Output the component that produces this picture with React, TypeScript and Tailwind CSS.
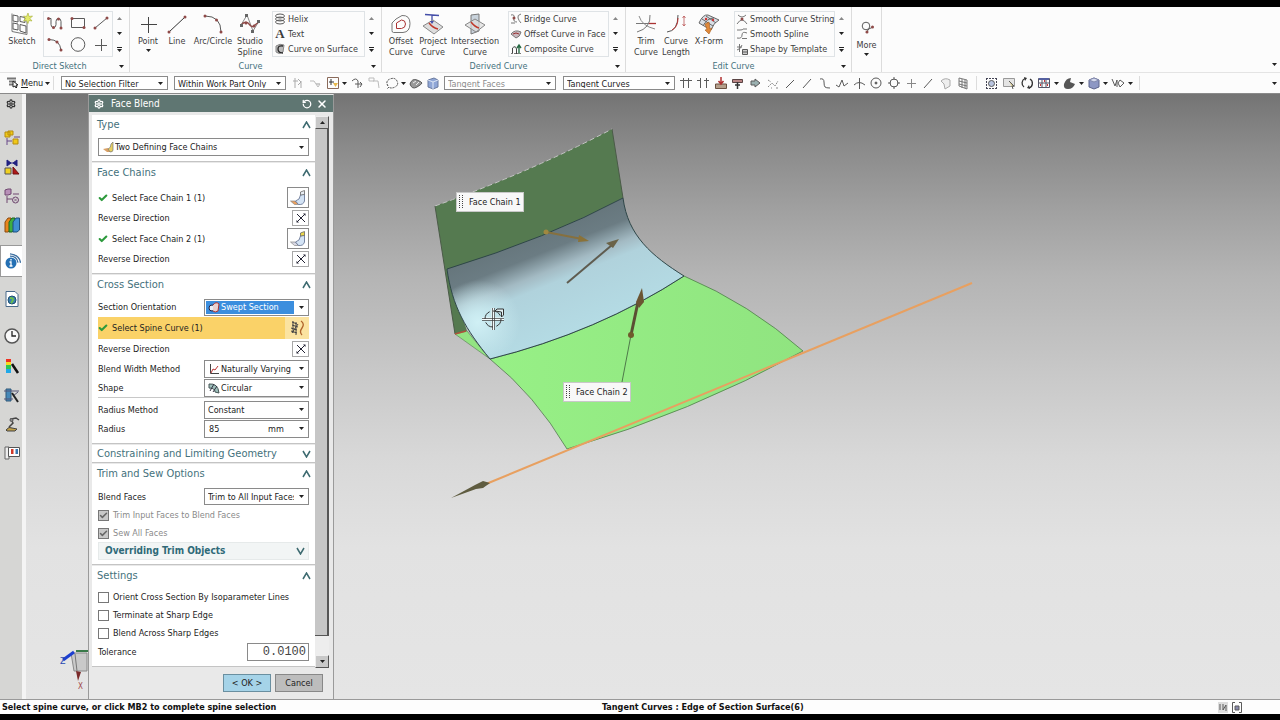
import { useState } from "react";
import type { ReactNode } from "react";
import { Check, RotateCcw, Settings, X } from "lucide-react";
import clsx from "clsx";

/* ---------- small building blocks ---------- */

interface GlyphProps {
  w?: number;
  h?: number;
  children: ReactNode;
}

function Glyph({ w = 14, h = 14, children }: GlyphProps) {
  return (
    <svg width={w} height={h} viewBox={`0 0 ${w} ${h}`} fill="none" stroke="#5a5a5a" strokeWidth="1" className="shrink-0" aria-hidden="true">
      {children}
    </svg>
  );
}

function Triangle({ up = false, dim = false }: { up?: boolean; dim?: boolean }) {
  return (
    <svg width="5" height="3" viewBox="0 0 5 3" className={clsx("shrink-0", up && "rotate-180")} aria-hidden="true">
      <path d="M0 0h5L2.5 3z" fill={dim ? "#888" : "#222"} />
    </svg>
  );
}

function Dot({ x, y }: { x: number; y: number }) {
  return <circle cx={x} cy={y} r="1.5" fill="#8f4a48" stroke="none" />;
}

/* ---------- ribbon icons ---------- */

const icons = {
  sketch: (
    <Glyph w={22} h={22}>
      <path d="M2 2l5 1v6l-5-1zM9 3.500l5 1v5l-5-1zM2 10l5 1v6l-5-1zM9 11.500l6 1.500v7l-6-2z" />
      <path d="M1 .5v18l15 3V8" stroke="#777" />
      <path d="M17 0l1 3.500L21.500 3l-2.500 2.500 2 2.500-3-.5-1 3-1.500-3-3 .5 2-2.500-2-2.500 3 .5z" fill="#e3ea6a" stroke="#a5ac38" strokeWidth=".6" />
    </Glyph>
  ),
  profile: (
    <Glyph w={16} h={14}>
      <path d="M1 2.500h3v6q0 3 2.500 3t2.500-3V5.500q0-3 2.500-3t2.500 3V12" />
      <Dot x={1.500} y={2.500} />
      <Dot x={14} y={12} />
      <Dot x={6.500} y={11.500} />
      <Dot x={11.500} y={3} />
    </Glyph>
  ),
  rect: (
    <Glyph w={16} h={14}>
      <path d="M1.500 2.500h13v9h-13z" />
      <Dot x={2} y={2.500} />
      <Dot x={14} y={11.500} />
    </Glyph>
  ),
  line: (
    <Glyph w={16} h={14}>
      <path d="M2 12L14 2" />
      <Dot x={2} y={12} />
      <Dot x={14} y={2} />
    </Glyph>
  ),
  arc: (
    <Glyph w={16} h={14}>
      <path d="M2 1.500q11 0 12 11" />
      <Dot x={2} y={1.500} />
      <Dot x={10} y={4} />
      <Dot x={14} y={12} />
    </Glyph>
  ),
  circle: (
    <Glyph w={16} h={15}>
      <circle cx="8" cy="7.500" r="6.800" />
    </Glyph>
  ),
  plus: (
    <Glyph w={16} h={14}>
      <path d="M8.500 1v12M2 7.500h12" />
    </Glyph>
  ),
  point: (
    <Glyph w={20} h={20}>
      <path d="M10.500 3v16M3 10.500h16" stroke="#444" />
    </Glyph>
  ),
  bigLine: (
    <Glyph w={20} h={20}>
      <path d="M2 18L18 3" stroke="#333" />
      <Dot x={2} y={18} />
      <Dot x={18} y={3} />
    </Glyph>
  ),
  bigArc: (
    <Glyph w={20} h={20}>
      <path d="M2 2q16 0 16 16" />
      <Dot x={2} y={2} />
      <Dot x={13.500} y={6} />
      <Dot x={18} y={18} />
    </Glyph>
  ),
  studioSpline: (
    <Glyph w={22} h={22}>
      <path d="M2 12L8 2l6 16 6-10" stroke="#888" />
      <path d="M2 12q5-5 8-1t5 2 5-4" stroke="#8f4a48" strokeWidth="1.300" />
      <path d="M6 1h3v3H6zM1 11h3v3H1zM12 17h3v3h-3zM18 7h3v3h-3z" fill="#666" stroke="none" />
      <Dot x={7} y={10} />
      <Dot x={15} y={13} />
    </Glyph>
  ),
  offset: (
    <Glyph w={20} h={20}>
      <path d="M5 5l6-3.500q8-.5 8 8t-7 9H2.500q-1.500 0-1.500-2V9z" stroke="#777" />
      <path d="M5.500 14.500V9l5-3q4 0 4 4t-4 4.500z" stroke="#a33" />
    </Glyph>
  ),
  project: (
    <Glyph w={22} h={22}>
      <path d="M3 1.500l14 1M10 2v7" stroke="#444ea8" strokeWidth="1.300" />
      <path d="M1 13l10-6 10 7-9 7z" fill="#ddd" stroke="#888" />
      <path d="M7 10q4 5 9 6" stroke="#c0392b" strokeWidth="1.500" />
      <path d="M8 8l2 3 2-3z" fill="#444ea8" stroke="none" />
    </Glyph>
  ),
  intersection: (
    <Glyph w={22} h={22}>
      <path d="M7 2l8-1v17l-8 3z" fill="#c9d3dc" stroke="#777" />
      <path d="M1 12l10-6 10 6-9 7z" fill="#ddd" fillOpacity=".7" stroke="#888" />
      <path d="M7 9q4 5 8 6" stroke="#c0392b" strokeWidth="1.500" />
    </Glyph>
  ),
  trim: (
    <Glyph w={22} h={20}>
      <path d="M1 9.500h14M2 18Q16 14 15 1" stroke="#777" />
      <path d="M4 2q3 10 16 13" stroke="#8a8a8a" />
      <path d="M14 9.500h7" stroke="#a33" strokeWidth="1.300" />
    </Glyph>
  ),
  length: (
    <Glyph w={20} h={20}>
      <path d="M1 18q11-1 11-17" stroke="#555" />
      <path d="M6 16q6-3 6-12" stroke="#b33" />
      <path d="M18 2v10M16.500 4L18 2l1.500 2M16.500 10l1.500 2 1.500-2" stroke="#b55" strokeWidth=".8" />
    </Glyph>
  ),
  xform: (
    <Glyph w={22} h={22}>
      <path d="M1 10q4-9 9-8l11 5q-5 2-8 10z" fill="#d9dfe6" stroke="#666" />
      <path d="M4 6l11 7M8 3l10 7M5 13Q9 5 16 5" stroke="#666" />
      <path d="M7 11l4-2 1 7 2-1-3 6-4-4 2-.5z" fill="#e08a3c" stroke="#a55a1a" strokeWidth=".6" />
      <circle cx="8" cy="6" r="1.200" fill="#c33" stroke="none" />
      <circle cx="15" cy="7" r="1.200" fill="#c33" stroke="none" />
    </Glyph>
  ),
  more: (
    <Glyph w={16} h={14}>
      <circle cx="7" cy="5" r="3.800" />
      <path d="M7 12q2-5 7-6" />
      <Dot x={8} y={11} />
      <Dot x={13.500} y={6} />
    </Glyph>
  ),
  helix: (
    <Glyph w={12} h={12}>
      <ellipse cx="6" cy="3" rx="4.500" ry="2" />
      <ellipse cx="6" cy="6" rx="4.500" ry="2" />
      <ellipse cx="6" cy="9" rx="4.500" ry="2" />
    </Glyph>
  ),
  surfaceCurve: (
    <Glyph w={12} h={12}>
      <path d="M2 3q4-3 8-1l-1 7q-4 3-7 0z" fill="#bbb" stroke="#888" />
      <path d="M9 3Q4 2 4 6t5 4" stroke="#222" strokeWidth="1.300" />
    </Glyph>
  ),
  bridge: (
    <Glyph w={12} h={12}>
      <path d="M1 2q4-1 3 3t3 4M11 1Q7 2 8 5t3 5M1 10h4" stroke="#777" />
      <Dot x={4} y={5} />
    </Glyph>
  ),
  offsetFace: (
    <Glyph w={12} h={12}>
      <path d="M1 6q4-5 10-2-1 5-5 6z" fill="#c9b6bc" stroke="#777" />
      <path d="M3 6q3-2 6 0" stroke="#933" />
    </Glyph>
  ),
  composite: (
    <Glyph w={12} h={12}>
      <path d="M2.500 11V5q3-3 4 1v5" stroke="#444" />
      <path d="M9 11V3M7 5l2-3 2 3" stroke="#286b45" strokeWidth="1.400" />
      <path d="M1 10.500h10" stroke="#777" strokeDasharray="2 1" />
    </Glyph>
  ),
  smoothString: (
    <Glyph w={12} h={12}>
      <path d="M1 11Q6 3 11 11M2 2q4 4 8 0" stroke="#777" />
      <Dot x={6} y={6} />
    </Glyph>
  ),
  smoothSpline: (
    <Glyph w={12} h={12}>
      <path d="M1 2h3q3 0 3-1h4M1 10q5 1 5-3t5-2M6 10.500h5" stroke="#777" />
    </Glyph>
  ),
  template: (
    <Glyph w={12} h={12}>
      <path d="M3.500 1v8M1 4h5M1 7q4-1 5-5" stroke="#777" />
      <path d="M6.500 6.500h5v5h-5zM6.500 9h5" fill="#ccc" />
    </Glyph>
  ),
};

/* ---------- ribbon ---------- */

function BigButton({ icon, label, width, menu }: { icon: ReactNode; label: string; width: string; menu?: boolean }) {
  return (
    <button type="button" className={clsx("flex shrink-0 flex-col items-center", width)}>
      <span className="flex h-[25px] items-center justify-center">{icon}</span>
      <span className="text-center leading-[11px] whitespace-pre">{label}</span>
      {menu && (
        <span className="mt-0.5">
          <Triangle />
        </span>
      )}
    </button>
  );
}

function GalleryArrows() {
  return (
    <div className="flex h-[46px] w-3 shrink-0 flex-col items-center justify-around">
      <button type="button" aria-label="Scroll up" className="flex h-3 w-3 items-center justify-center">
        <Triangle up dim />
      </button>
      <button type="button" aria-label="Scroll down" className="flex h-3 w-3 items-center justify-center">
        <Triangle />
      </button>
      <button type="button" aria-label="Open gallery" className="flex h-3 w-3 flex-col items-center justify-center gap-px">
        <span className="h-px w-[5px] bg-[#222]" />
        <Triangle />
      </button>
    </div>
  );
}

function RibbonGroup({ title, width, children }: { title: string; width: string; children: ReactNode }) {
  return (
    <section className={clsx("flex shrink-0 flex-col border-r border-[#dcdcdc]", width)}>
      <div className="flex h-[53px] pt-1">{children}</div>
      <div className="flex h-3 items-center pr-[5px]">
        <h2 className="flex-1 text-center text-[#44717c]">{title}</h2>
        <button type="button" aria-label={`${title} options`}>
          <Triangle />
        </button>
      </div>
    </section>
  );
}

function GalleryList({ items, width }: { items: [ReactNode, string][]; width: string }) {
  return (
    <ul className={clsx("flex h-[46px] shrink-0 flex-col border border-[#dfe3e6]", width)}>
      {items.map(([icon, label]) => (
        <li key={label} className="flex h-[15px]">
          <button type="button" className="flex items-center gap-0.5 pl-px whitespace-nowrap">
            {icon}
            {label}
          </button>
        </li>
      ))}
    </ul>
  );
}

function Ribbon() {
  return (
    <header className="flex h-[66px] border-b border-[#e4e4e4] bg-[#fcfcfc] text-[#3c3c3c]">
      <RibbonGroup title="Direct Sketch" width="w-[130px]">
        <div className="w-0.5" />
        <BigButton icon={icons.sketch} label="Sketch" width="w-10" />
        <div className="ml-px grid h-[46px] w-[70px] grid-cols-3 place-items-center border border-[#dfe3e6]">
          {(["profile", "rect", "line", "arc", "circle", "plus"] as const).map((name) => (
            <button key={name} type="button" aria-label={name}>
              {icons[name]}
            </button>
          ))}
        </div>
        <GalleryArrows />
      </RibbonGroup>
      <RibbonGroup title="Curve" width="w-[252px]">
        <div className="w-[5px]" />
        <BigButton icon={icons.point} label="Point" width="w-[26px]" menu />
        <BigButton icon={icons.bigLine} label="Line" width="w-8" />
        <BigButton icon={icons.bigArc} label="Arc/Circle" width="w-10" />
        <BigButton icon={icons.studioSpline} label={"Studio\nSpline"} width="w-[34px] mr-[5px]" />
        <GalleryList
          width="w-[93px]"
          items={[
            [icons.helix, "Helix"],
            [<span key="a" className="w-3 text-center font-['Liberation_Serif',serif] text-[13px] font-bold">A</span>, "Text"],
            [icons.surfaceCurve, "Curve on Surface"],
          ]}
        />
        <GalleryArrows />
      </RibbonGroup>
      <RibbonGroup title="Derived Curve" width="w-[244px]">
        <div className="w-[3px]" />
        <BigButton icon={icons.offset} label={"Offset\nCurve"} width="w-8" />
        <BigButton icon={icons.project} label={"Project\nCurve"} width="w-8" />
        <BigButton icon={icons.intersection} label={"Intersection\nCurve"} width="w-[52px] mr-[7px]" />
        <GalleryList
          width="w-[101px]"
          items={[
            [icons.bridge, "Bridge Curve"],
            [icons.offsetFace, "Offset Curve in Face"],
            [icons.composite, "Composite Curve"],
          ]}
        />
        <GalleryArrows />
      </RibbonGroup>
      <RibbonGroup title="Edit Curve" width="w-[226px]">
        <div className="w-[5px]" />
        <BigButton icon={icons.trim} label={"Trim\nCurve"} width="w-[30px]" />
        <BigButton icon={icons.length} label={"Curve\nLength"} width="w-[30px]" />
        <BigButton icon={icons.xform} label="X-Form" width="w-9 mr-[7px]" />
        <GalleryList
          width="w-[101px]"
          items={[
            [icons.smoothString, "Smooth Curve String"],
            [icons.smoothSpline, "Smooth Spline"],
            [icons.template, "Shape by Template"],
          ]}
        />
        <GalleryArrows />
      </RibbonGroup>
      <div className="flex w-[30px] justify-center border-r border-[#dcdcdc] pt-2">
        <BigButton icon={icons.more} label="More" width="w-7" menu />
      </div>
      <button type="button" aria-label="Ribbon options" className="mt-auto mr-[3px] mb-1.5 ml-auto">
        <Triangle />
      </button>
    </header>
  );
}

/* ---------- selects ---------- */

interface SelectBoxProps {
  label: string;
  value: string;
  width: string;
  id?: string;
  icon?: ReactNode;
  highlight?: boolean;
  disabled?: boolean;
}

function SelectBox({ label, value, width, id, icon, highlight, disabled }: SelectBoxProps) {
  return (
    <div className={clsx("relative flex shrink-0 items-center border border-[#8a8a8a] bg-white py-px pr-3.5 pl-px", width)}>
      {icon && <span className="pointer-events-none absolute left-[3px]">{icon}</span>}
      <select
        id={id}
        aria-label={label}
        disabled={disabled}
        className={clsx(
          "h-full w-full appearance-none overflow-hidden outline-none",
          icon ? "pl-[15px]" : "pl-0.5",
          highlight && "bg-[#3b8ede] text-white",
          disabled ? "text-[#8c8c8c]" : !highlight && "text-[#222]",
        )}
      >
        <option>{value}</option>
      </select>
      <span className="pointer-events-none absolute right-1">
        <Triangle />
      </span>
    </div>
  );
}

/* ---------- selection toolbar ---------- */

const filterIcons: [string, ReactNode][] = [
  ["Stop at intersection", <path key="p" d="M4.500 2v10M9.500 2v10M1 4.500h12" />],
  ["Follow fillet", <path key="p" d="M4.500 2v10M10.500 2v10M1 4.500h4M8 4.500h5" />],
  ["Chain within feature", <g key="p"><path d="M1.500 12.500V8h11v4.500z" fill="#b5a08c" stroke="#6a5040" /><path d="M7 1v6M4.500 5L7 8l2.500-3" stroke="#b03030" strokeWidth="1.500" /></g>],
  ["Path selection", <g key="p"><path d="M1.500 3.500h10v3h-10z" fill="#b98484" stroke="#5a4444" /><path d="M6.500 6v7M4 9h5" stroke="#333" strokeWidth="1.500" /></g>],
  ["Allow selection", <path key="p" d="M3 5h4V3l5 4-5 4V9H3z" fill="#9ab0b0" />],
  ["Enable snap point", <path key="p" d="M2 11l4-4 3 3 3-5M2 4l3 2M10 12h2M5 12h1" stroke="#888" strokeDasharray="2 1" />],
  ["End point", <path key="p" d="M3 12l8-8" />],
  ["Mid point", <path key="p" d="M3 12l8-9" />],
  ["Control point", <path key="p" d="M2 3q4-1 4 3t1 5 5 1" />],
  ["Pole", <path key="p" d="M1 9l3 2 3-7 2 6 4-3" />],
  ["Intersection point", <path key="p" d="M7.500 2v11M2 9q5-5 11 0" />],
  ["Arc center", <g key="p"><circle cx="7" cy="7" r="5" /><circle cx="7" cy="7" r="1" fill="#555" /></g>],
  ["Quadrant point", <g key="p"><circle cx="7" cy="7" r="4" /><path d="M7 1v3M7 10v3M1 7h3M10 7h3" /></g>],
  ["Existing point", <path key="p" d="M7.500 3v9M3 7.500h9" stroke="#888" />],
  ["Point on curve", <path key="p" d="M3 12l8-9" />],
  ["Point on face", <path key="p" d="M2 5q4-4 9-1v6l-5 3-1-5z" stroke="#aaa" fill="#eee" />],
  ["Bounded grid", <path key="p" d="M3 2l8 2v9l-8-3zM3 5l8 2M3 8l8 2M6 3v9M9 4v8" stroke="#777" />],
];

function ToolButton({ label, children }: { label: string; children: ReactNode }) {
  return (
    <button type="button" aria-label={label} className="flex w-4 shrink-0 items-center justify-center">
      <Glyph>{children}</Glyph>
    </button>
  );
}

function Toolbar() {
  return (
    <nav className="flex h-[21px] items-center border-b border-[#8a8a8a] bg-[#fcfcfc] text-[#222]" aria-label="Selection bar">
      <button type="button" className="flex w-[54px] items-center gap-0.5 border-r border-[#dcdcdc] pl-1.5">
        <Glyph w={13}>
          <path d="M1 2.500h9M3 5.500h7M3 8.500h5" strokeWidth="2" stroke="#777" />
          <path d="M7 5v6l2-1 1 2 1-1-1-2h2z" fill="#fff" stroke="#222" />
        </Glyph>
        <span>
          <u>M</u>enu
        </span>
        <Triangle />
      </button>
      <SelectBox label="Selection filter" value="No Selection Filter" width="ml-[7px] h-3.5 w-[107px]" />
      <SelectBox label="Selection scope" value="Within Work Part Only" width="ml-1.5 h-3.5 w-[112px]" />
      <div className="ml-1 flex w-[151px] items-center justify-between">
        <ToolButton label="Allow hidden">
          <path d="M4 2v10M2 5h5M7 3l3 3-3 3M10 5v7" stroke="#aaa" />
        </ToolButton>
        <ToolButton label="Shade">
          <path d="M2 5h4l2 3h4M8 8l2 3 2-3z" stroke="#bbb" />
        </ToolButton>
        <ToolButton label="Snap">
          <path d="M1.500 1.500h11v11h-11z" stroke="#8a6a5a" />
          <path d="M5 3v6M3 6h5" stroke="#333" />
          <path d="M7 7h5l-2.500 4z" fill="#e8b84a" stroke="none" />
        </ToolButton>
        <Triangle />
        <ToolButton label="Reset filters">
          <path d="M2 5q4-4 6 0v7M5 8h7M10 6l2 2-2 3" />
        </ToolButton>
        <ToolButton label="Deselect">
          <path d="M2 2h5v3H2zM6 5h5l1 7" stroke="#bbb" />
        </ToolButton>
        <ToolButton label="Lasso">
          <path d="M3 10Q0 5 5 3t7 2-2 6-6 0l-2 2" stroke="#444" strokeDasharray="2 1" />
        </ToolButton>
        <Triangle />
        <ToolButton label="Highlight hidden edges">
          <path d="M1 8q2-6 7-4t5 3-5 4-7-3z" fill="#9a9a9a" />
          <path d="M4 7l3-2M7 9l3-3" stroke="#eee" />
        </ToolButton>
        <ToolButton label="Solid body">
          <path d="M2 4l6-2 4 2v7l-5 2-5-2z" fill="#8fa6d6" stroke="#6b7ba0" />
          <path d="M2 4l5 2 5-2M7 6v7" stroke="#dde6f5" />
        </ToolButton>
      </div>
      <SelectBox label="Face rule" value="Tangent Faces" width="ml-[3px] h-3.5 w-[112px]" disabled />
      <SelectBox label="Curve rule" value="Tangent Curves" width="ml-[7px] h-3.5 w-[112px]" />
      <div className="ml-[3px] flex w-[293px] items-center justify-between">
        {filterIcons.map(([label, shape]) => (
          <ToolButton key={label} label={label}>
            {shape}
          </ToolButton>
        ))}
      </div>
      <div className="ml-[5px] flex w-[164px] items-center justify-between border-x border-[#dcdcdc] px-1.5">
        <ToolButton label="Fit">
          <path d="M2 2.500h11M2 12.500h11M2.500 2v11M12.500 2v11" stroke="#445" strokeDasharray="2 1" />
          <circle cx="7.500" cy="7.500" r="3" fill="#b8c4e0" />
        </ToolButton>
        <ToolButton label="Zoom">
          <path d="M1.500 2.500h11v8h-11z" fill="#e4e4e4" stroke="#999" />
          <path d="M7 5l5 5-2 0 1 3" fill="#d9c98a" />
        </ToolButton>
        <ToolButton label="Rotate">
          <path d="M4 11A5 5 0 0 1 5 2.500M10 3a5 5 0 0 1-1 9" stroke="#333" strokeWidth="1.300" />
          <path d="M4 1l3 1-2 3zM10 13l-3-1 2-3z" fill="#333" stroke="none" />
        </ToolButton>
        <ToolButton label="Layout">
          <path d="M1.500 2.500h11v9h-11zM5 3v9M9 3v9M2 7h10" stroke="#556" />
          <path d="M2 3h10" stroke="#5560a0" strokeWidth="2" />
          <path d="M3 9h1M7 5h1M10 9h1" stroke="#c33" strokeWidth="2" />
        </ToolButton>
        <Triangle />
        <ToolButton label="Rendering style">
          <path d="M2 8q2-6 7-6l-1 4 5 2q-2 5-7 5t-4-5z" fill="#555" stroke="none" />
        </ToolButton>
        <Triangle />
        <ToolButton label="View orientation">
          <path d="M2 4l5-2 5 2v7l-5 2-5-2z" fill="#8d97c4" stroke="#5d648c" />
          <path d="M2 4l5 2 5-2-5-2z" fill="#d5daee" stroke="#8087ab" />
        </ToolButton>
        <Triangle />
        <ToolButton label="Section">
          <path d="M1 3l3 7 2-6v7M9 4l4 3-4 4-2-4z" />
        </ToolButton>
        <Triangle />
      </div>
      <button type="button" aria-label="Selection bar options" className="mr-[3px] ml-auto">
        <Triangle />
      </button>
    </nav>
  );
}

/* ---------- resource bar ---------- */

const resources: { label: string; size: string; icon: ReactNode }[] = [
  {
    label: "Assembly Navigator",
    size: "h-[29px] mt-[9px]",
    icon: (
      <>
        <path d="M1 2h5v5H1zM9 9h5v5H9zM4 1h5v4H4z" fill="#f0c818" stroke="#b48c10" />
        <path d="M3 8v7M3 11h5M10 7h6" stroke="#6a4a8a" />
      </>
    ),
  },
  {
    label: "Constraint Navigator",
    size: "h-[29px]",
    icon: (
      <>
        <path d="M3 1l4 3-4 3zM13 1L9 4l4 3zM7 4h2" fill="#202080" stroke="#202080" />
        <path d="M1 9h6v6H1z" fill="#f0d020" stroke="#555" />
        <path d="M9 15V8l6 7z" fill="#b01818" stroke="#701010" />
      </>
    ),
  },
  {
    label: "Part Navigator",
    size: "h-[29px]",
    icon: (
      <>
        <path d="M1 2l3-1h3v5l-3 1H1z" fill="#b890b8" stroke="#704870" />
        <path d="M3 8v7M3 11h5M9 6h6" stroke="#704870" />
        <circle cx="11.500" cy="12" r="3" stroke="#704870" />
        <path d="M10 10.500l3 3M13 10.500l-3 3" stroke="#704870" strokeWidth=".7" />
      </>
    ),
  },
  {
    label: "Reuse Library",
    size: "h-[30px]",
    icon: (
      <>
        <path d="M1 5l3-4h3v12l-3 2H1z" fill="#e8851c" stroke="#8a4a10" />
        <path d="M5 5l3-4h3v12l-3 2H5z" fill="#3fae3f" stroke="#1c641c" />
        <path d="M9 5l3-4h3.500v12L13 15H9z" fill="#3f8fd0" stroke="#1c4f80" />
      </>
    ),
  },
  {
    label: "HD3D Tools",
    size: "h-[32px] mt-[5px]",
    icon: (
      <>
        <circle cx="6" cy="10" r="5.500" fill="#2470b4" stroke="none" />
        <path d="M6 6v1.500M4.500 9H6v4M4.500 13h3" stroke="#fff" strokeWidth="1.300" />
        <path d="M5 .8q9.500 1 10.500 9M5 3.200q7 0 8 6.500" stroke="#3b6ea0" strokeWidth="1.300" />
      </>
    ),
  },
  {
    label: "Web Browser",
    size: "h-11",
    icon: (
      <>
        <path d="M2 .5h9l3 3v12H2z" fill="#fff" stroke="#4a6a8a" />
        <circle cx="8" cy="9" r="4" fill="#3b7fb0" stroke="#205070" />
        <path d="M6 7q4 0 3 2t-2 3" stroke="#6cc04a" strokeWidth="1.800" />
      </>
    ),
  },
  {
    label: "History",
    size: "h-[30px]",
    icon: (
      <>
        <circle cx="8" cy="8" r="7" fill="#f8f8f8" stroke="#555" strokeWidth="1.500" />
        <path d="M8 3v5h4" stroke="#222" strokeWidth="1.300" />
      </>
    ),
  },
  {
    label: "System Materials",
    size: "h-[29px]",
    icon: (
      <>
        <path d="M2 1h5v3H2z" fill="#f03020" stroke="none" />
        <path d="M2 4h5v3H2z" fill="#f8d820" stroke="none" />
        <path d="M2 7h5v4H2z" fill="#30c850" stroke="none" />
        <path d="M2 11h5v4H2z" fill="#20a8e8" stroke="none" />
        <path d="M8 6l6 9" stroke="#111" strokeWidth="2.500" />
      </>
    ),
  },
  {
    label: "Process Studio",
    size: "h-[29px]",
    icon: (
      <>
        <path d="M2 2h5v12H2z" fill="#4888b8" stroke="#305878" />
        <path d="M0 4h15M0 12h9M9 9l5-4" stroke="#557" />
        <path d="M8 6l6 9" stroke="#222" strokeWidth="2" />
      </>
    ),
  },
  {
    label: "Manufacturing Wizards",
    size: "h-[29px]",
    icon: (
      <>
        <path d="M2 14q3-4 6-2l5 1-2 2H3z" fill="#c0a048" stroke="#444" />
        <path d="M5 11l4-4-2-4 5-1 3 2" stroke="#444" strokeWidth="1.500" />
        <circle cx="7.500" cy="4" r="1.500" fill="#888" />
      </>
    ),
  },
  {
    label: "Roles",
    size: "h-[29px]",
    icon: (
      <>
        <path d="M1 2h4v12H1z" fill="#eee" stroke="#666" />
        <path d="M4.500 2.500h11v9h-11z" fill="#fff" stroke="#555" />
        <path d="M7 4h2.500v5H7z" fill="#d03828" stroke="none" />
        <path d="M11.500 4H14v5h-2.500z" fill="#3878b0" stroke="none" />
      </>
    ),
  },
];

function ResourceBar() {
  return (
    <aside className="w-[26px] shrink-0 border-r-4 border-[#f4f4f4] bg-[#d6d6d4]">
      <button type="button" aria-label="Resource bar options" className="flex h-5 w-full items-center justify-center">
        <Settings size={10} color="#333" strokeWidth={3} />
      </button>
      {resources.map(({ label, size, icon }) => (
        <button
          key={label}
          type="button"
          aria-label={label}
          className={clsx(
            "flex w-full items-center justify-center pl-0.5",
            size,
            label === "HD3D Tools" && "border border-r-0 border-[#999] bg-white",
          )}
        >
          <Glyph w={16} h={16}>
            {icon}
          </Glyph>
        </button>
      ))}
    </aside>
  );
}

/* ---------- face blend dialog ---------- */

function Chevron({ down = false }: { down?: boolean }) {
  return (
    <svg width="9" height="8" viewBox="0 0 9 8" className={clsx(down && "rotate-180")} aria-hidden="true">
      <path d="M1 7l3.500-6L8 7" fill="none" stroke="#3d6a70" strokeWidth="1.500" />
    </svg>
  );
}

function Panel({ title, open = true, children }: { title: string; open?: boolean; children?: ReactNode }) {
  return (
    <section className="mb-px border-b border-[#c4c4c4] bg-white">
      <button
        type="button"
        aria-expanded={open}
        className={clsx("flex w-full items-center justify-between pr-1 pl-[5px] text-[11px] text-[#44717c]", open ? "h-5" : "h-[17px]")}
      >
        {title}
        <Chevron down={!open} />
      </button>
      {children && <div className="px-1.5">{children}</div>}
    </section>
  );
}

function Row({ label, htmlFor, height = "h-[19px]", children }: { label: string; htmlFor?: string; height?: string; children: ReactNode }) {
  return (
    <div className={clsx("flex items-center justify-between", height)}>
      <label htmlFor={htmlFor}>{label}</label>
      {children}
    </div>
  );
}

const Tick = () => <Check size={10} color="#2c9a3c" strokeWidth={5} className="mr-1 shrink-0" />;

function FaceButton({ label, low, high }: { label: string; low: string; high: string }) {
  return (
    <button type="button" aria-label={label} className="flex h-[21px] w-[22px] items-center justify-center border border-[#8a8a8a] bg-white">
      <Glyph w={16} h={16}>
        <path d="M.5 11l4 3.500h4L5.500 11z" fill={low} stroke="#888" strokeWidth=".7" />
        <path d="M5.500 11q4.500-1 5-6l4-1v7q-1 4-6 3.500z" fill="#d3e3f5" stroke="#5a6a8c" strokeWidth=".8" />
        <path d="M10.500 5V2l4-1.500v4z" fill={high} stroke="#666" strokeWidth=".8" />
      </Glyph>
    </button>
  );
}

function ReverseRow() {
  return (
    <div className="flex h-5 items-center justify-between">
      <span>Reverse Direction</span>
      <button type="button" aria-label="Reverse Direction" className="flex h-4 w-[17px] items-center justify-center border border-[#a8a8a8] bg-white">
        <Glyph w={12} h={12}>
          <path d="M2 2l8 8M2 10l8-8" stroke="#223" strokeWidth="1" />
          <path d="M8 1.500h2.500V4zM1.500 8v2.500H4z" fill="#223" stroke="none" />
        </Glyph>
      </button>
    </div>
  );
}

function CheckRow({ label, locked = false }: { label: string; locked?: boolean }) {
  const [on, setOn] = useState(locked);
  return (
    <label className={clsx("flex h-[18px] items-center gap-1", locked && "text-[#8a8a8a]")}>
      <span className="relative flex size-[11px]">
        <input
          type="checkbox"
          checked={on}
          disabled={locked}
          onChange={(e) => setOn(e.target.checked)}
          className={clsx("size-[11px] appearance-none border border-[#777]", locked ? "bg-[#c8c8c8]" : "bg-white")}
        />
        {on && <Check size={9} color="#666" strokeWidth={4} className="pointer-events-none absolute top-px left-px" />}
      </span>
      {label}
    </label>
  );
}

function ScrollBar() {
  return (
    <div className="mt-px flex w-[14px] shrink-0 flex-col">
      <button type="button" aria-label="Scroll up" className="flex h-[13px] items-center justify-center border border-[#eee] border-r-[#555] border-b-[#555] bg-[#c8c8c8]">
        <Triangle up />
      </button>
      <div className="h-[507px] border-r-2 border-b border-r-[#555] border-b-[#555] bg-[#c6c6c6]" />
      <div className="flex-1 bg-[#ededed]" />
      <button type="button" aria-label="Scroll down" className="flex h-[13px] items-center justify-center border border-[#eee] border-r-[#555] border-b-[#555] bg-[#c8c8c8]">
        <Triangle />
      </button>
    </div>
  );
}

function FaceBlendDialog() {
  return (
    <div role="dialog" aria-label="Face Blend" className="relative flex w-[246px] shrink-0 flex-col border border-[#9a9a9a] border-t-[#e8e8e8] border-b-0 bg-[#e9e9e9] text-[#222]">
      <div className="flex h-[17px] items-center bg-[#5f7672] px-[5px] text-white">
        <Settings size={10} strokeWidth={3} />
        <h1 className="ml-[7px] flex-1 text-[10px]">Face Blend</h1>
        <button type="button" aria-label="Reset" className="mr-1">
          <RotateCcw size={10} strokeWidth={3} />
        </button>
        <button type="button" aria-label="Close">
          <X size={12} strokeWidth={3} />
        </button>
      </div>
      <div className="flex pt-[3px] pl-[3px]">
        <div className="w-[223px] shrink-0">
          <Panel title="Type">
            <div className="pt-[3px] pb-[5px]">
              <SelectBox
                label="Type"
                value="Two Defining Face Chains"
                width="h-[18px] w-[211px]"
                icon={
                  <Glyph w={12} h={12}>
                    <path d="M1 8l4 3h4L6 7z" fill="#d9a066" stroke="none" />
                    <path d="M6 8q3-1 3-5l2-2v8q0 2-3 2z" fill="#e8d060" stroke="#777" strokeWidth=".7" />
                  </Glyph>
                }
              />
            </div>
          </Panel>
          <Panel title="Face Chains">
            <div className="py-1">
              <div className="flex h-[21px] items-center">
                <Tick />
                <span className="flex-1">Select Face Chain 1 (1)</span>
                <FaceButton label="Select Face Chain 1" low="#e9a060" high="#e8edf4" />
              </div>
              <ReverseRow />
              <div className="flex h-[21px] items-center">
                <Tick />
                <span className="flex-1">Select Face Chain 2 (1)</span>
                <FaceButton label="Select Face Chain 2" low="#d8d8e4" high="#ecd84a" />
              </div>
              <ReverseRow />
            </div>
          </Panel>
          <Panel title="Cross Section">
            <div className="pt-0.5 pb-[5px]">
              <Row label="Section Orientation" htmlFor="orientation" height="h-5">
                <SelectBox
                  id="orientation"
                  label="Section Orientation"
                  value="Swept Section"
                  width="h-[17px] w-[105px]"
                  highlight
                  icon={
                    <Glyph w={12} h={12}>
                      <circle cx="4" cy="7" r="3" fill="#e8eef8" stroke="#224" />
                      <path d="M5 4q3-4 6-1l-1 7q-3 2-5 0" fill="#e8d0d0" stroke="#a33" />
                    </Glyph>
                  }
                />
              </Row>
              <div className="flex h-[22px] items-center justify-between bg-[#fbe3a0]">
                <div className="flex h-full w-[187px] items-center bg-[#fad268]">
                  <Tick />
                  <span>Select Spine Curve (1)</span>
                </div>
                <button type="button" aria-label="Select Spine Curve" className="flex w-[22px] justify-center">
                  <Glyph w={16} h={16}>
                    <path d="M2 2l5 2M2 5l6 2M1 8l6 2M1 11l6 2M3 1v12M6 2v13M8 4l-6 9" stroke="#444" />
                    <path d="M11 1q4 3 1 7t0 7" stroke="#b0642c" strokeWidth="1.300" />
                  </Glyph>
                </button>
              </div>
              <ReverseRow />
              <Row label="Blend Width Method" htmlFor="width-method">
                <SelectBox
                  id="width-method"
                  label="Blend Width Method"
                  value="Naturally Varying"
                  width="h-[18px] w-[105px]"
                  icon={
                    <Glyph w={12} h={12}>
                      <path d="M2.500 1v9.500H11" stroke="#444" />
                      <path d="M3 10l2-4 2 1 3-4" stroke="#b33" />
                    </Glyph>
                  }
                />
              </Row>
              <Row label="Shape" htmlFor="shape">
                <SelectBox
                  id="shape"
                  label="Shape"
                  value="Circular"
                  width="h-[18px] w-[105px]"
                  icon={
                    <Glyph w={12} h={12}>
                      <path d="M1 2q9-1 10 9l-4-1q0-4-6-4z" fill="#9fc0bc" stroke="#455" />
                      <path d="M2 9l4-7M5 10l4-6" stroke="#334" />
                    </Glyph>
                  }
                />
              </Row>
              <hr className="mb-0.5 border-[#c8c8c8]" />
              <Row label="Radius Method" htmlFor="radius-method">
                <SelectBox id="radius-method" label="Radius Method" value="Constant" width="h-[18px] w-[105px]" />
              </Row>
              <Row label="Radius" htmlFor="radius">
                <div className="relative flex h-[18px] w-[105px] items-center border border-[#8a8a8a] bg-white">
                  <input id="radius" defaultValue="85" className="w-[60px] pl-1 outline-none" />
                  <select aria-label="Radius unit" className="w-[42px] appearance-none pl-[3px] outline-none">
                    <option>mm</option>
                  </select>
                  <span className="pointer-events-none absolute right-1">
                    <Triangle />
                  </span>
                </div>
              </Row>
            </div>
          </Panel>
          <Panel title="Constraining and Limiting Geometry" open={false} />
          <Panel title="Trim and Sew Options">
            <div className="pt-[3px] pb-1">
              <Row label="Blend Faces" htmlFor="blend-faces">
                <SelectBox id="blend-faces" label="Blend Faces" value="Trim to All Input Faces" width="h-[17px] w-[105px]" />
              </Row>
              <CheckRow label="Trim Input Faces to Blend Faces" locked />
              <CheckRow label="Sew All Faces" locked />
              <button type="button" aria-expanded={false} className="flex h-[18px] w-full items-center justify-between border border-[#e6eaea] bg-[#f2f5f5] pr-[3px] pl-1.5 text-[10px] font-bold text-[#2f6a78]">
                Overriding Trim Objects
                <Chevron down />
              </button>
            </div>
          </Panel>
          <Panel title="Settings">
            <div className="pt-0.5 pb-1">
              <CheckRow label="Orient Cross Section By Isoparameter Lines" />
              <CheckRow label="Terminate at Sharp Edge" />
              <CheckRow label="Blend Across Sharp Edges" />
              <Row label="Tolerance" htmlFor="tolerance" height="h-5">
                <input
                  id="tolerance"
                  defaultValue="0.0100"
                  className="h-[18px] w-[62px] border border-[#8a8a8a] bg-white pr-0.5 text-right font-['Liberation_Mono',monospace] text-[12px] text-[#444] outline-none"
                />
              </Row>
            </div>
          </Panel>
        </div>
        <ScrollBar />
      </div>
      <div className="flex justify-end gap-1 pt-1.5 pr-2.5 pb-[7px]">
        <button type="button" className="h-[18px] w-12 border border-[#6a8fa0] bg-[#a5d3e8]">
          &lt; OK &gt;
        </button>
        <button type="button" className="h-[18px] w-12 border border-[#888] bg-[#bdbdbd]">
          Cancel
        </button>
      </div>
    </div>
  );
}

/* ---------- graphics window ---------- */

function Model() {
  return (
    <svg viewBox="26 94 1254 605" preserveAspectRatio="xMinYMin meet" className="absolute inset-0 h-full w-full" role="img" aria-label="Face blend preview">
      <defs>
        <linearGradient id="blend" gradientUnits="userSpaceOnUse" x1="535" y1="230" x2="575" y2="330">
          <stop offset="0" stopColor="#65757b" />
          <stop offset=".22" stopColor="#6b7c83" />
          <stop offset=".4" stopColor="#a3bac3" />
          <stop offset=".52" stopColor="#b0d2dc" />
          <stop offset="1" stopColor="#b4dbe4" />
        </linearGradient>
        <radialGradient id="shine" gradientUnits="userSpaceOnUse" cx="478" cy="322" r="42">
          <stop offset="0" stopColor="#d0f0f5" />
          <stop offset="1" stopColor="#d0f0f5" stopOpacity="0" />
        </radialGradient>
        <linearGradient id="floor" x1="0" x2="1">
          <stop offset="0" stopColor="#97f086" />
          <stop offset="1" stopColor="#90e480" />
        </linearGradient>
      </defs>

      {/* wall face */}
      <path d="M435 206Q530 172 612 129L623 198Q548 238 447 270L467 331 455 334z" fill="#557a50" />
      <path d="M435 206Q530 172 612 129" fill="none" stroke="#c4c4c4" strokeWidth="1" strokeDasharray="5 3" />
      <path d="M435 206L455 334M612 129L623 198" stroke="#4b5b48" strokeWidth="1" />
      <path d="M455 334l12-3 23 28z" fill="#93e482" stroke="#587a52" strokeWidth=".6" />
      <path d="M455 334l11-3" stroke="#b0523a" strokeWidth="1.500" />

      {/* floor face */}
      <path
        d="M490 359Q598 332 684 276Q750 304 803 351Q690 413 567 449Q535 395 490 359z"
        fill="url(#floor)"
        stroke="#4f7a4a"
        strokeWidth=".8"
      />

      {/* blend surface */}
      <path d="M447 269Q548 238 623 198C628 236 652 256 684 276Q598 332 490 359C466 330 452 306 447 269z" fill="url(#blend)" />
      <path d="M447 269Q548 238 623 198C628 236 652 256 684 276Q598 332 490 359C466 330 452 306 447 269z" fill="url(#shine)" stroke="#2e4648" strokeWidth="1" />

      {/* spine curve */}
      <path d="M486 484L972 283" stroke="#e8a060" strokeWidth="2" />
      <path d="M451 498l24-13 8-4 7 2-7 5-7 1z" fill="#5f5c40" />

      {/* direction arrows */}
      <path d="M631 335l-9 47" stroke="#4f7a4a" strokeWidth="1" />
      <path d="M631 335l7-33" stroke="#5b4f33" strokeWidth="3" />
      <path d="M636 302l6-14 2 14-5 6z" fill="#6b5532" />
      <circle cx="631" cy="335" r="3" fill="#6f5a2c" />
      <path d="M567 283l45-38" stroke="#5f5c50" strokeWidth="2" />
      <path d="M606 243l13-4-6 9z" fill="#6b6348" />
      <path d="M546 232l36 7" stroke="#86703e" strokeWidth="2" />
      <path d="M579 235l10 6-11 1z" fill="#8a7238" />
      <circle cx="546" cy="232" r="2.500" fill="#a08840" />

      {/* selection cursor */}
      <g fill="none" stroke="#fff" strokeWidth="3" opacity=".8">
        <path d="M493 308v22M482 319h22" />
      </g>
      <g fill="none" stroke="#333" strokeWidth="1">
        <path d="M492.500 308v22M494.500 308v22M482 318.500h22M482 320.500h22" strokeWidth=".7" />
        <circle cx="493" cy="319" r="8" strokeDasharray="9 3.500" />
        <path d="M495 311l2-2h6.500v6l-2 2v-5z" fill="#e4f2f4" />
      </g>

      {/* view triad */}
      <path d="M71 653h16v18H74z" fill="#c9c9c9" stroke="#8a8a8a" />
      <path d="M75 654l2 17" stroke="#777" />
      <path d="M74 652l-11 8" stroke="#1c3fd0" strokeWidth="3" />
      <path d="M76 651h12" stroke="#3a7a4a" strokeWidth="2" />
      <path d="M76 671l2 10 3-9z" fill="#7a2a2a" />
      <text x="60" y="664" fontSize="9" fill="#2848b0">Z</text>
      <text x="78" y="689" fontSize="8" fill="#a04848">X</text>
    </svg>
  );
}

function FaceTag({ text, position }: { text: string; position: string }) {
  return (
    <div className={clsx("absolute flex h-5 w-[68px] items-center gap-[5px] border border-[#c8c8c8] bg-[#f8f8f8] pl-0.5 whitespace-nowrap text-[#222]", position)}>
      <svg width="5" height="14" viewBox="0 0 5 14" aria-hidden="true">
        <path d="M.5 0v14M3.500 0v14" stroke="#444" strokeDasharray="1 1" />
      </svg>
      {text}
    </div>
  );
}

function Viewport() {
  return (
    <main className="relative flex flex-1 bg-[linear-gradient(#747474_0%,#8b8b8b_9%,#a0a0a0_19%,#b4b4b4_30%,#c8c8c8_46%,#d8d8d8_60%,#e2e2e2_75%,#e5e5e5_100%)] pl-[62px]">
      <Model />
      <FaceBlendDialog />
      <FaceTag text="Face Chain 1" position="top-[98px] left-[430px]" />
      <FaceTag text="Face Chain 2" position="top-[288px] left-[537px]" />
    </main>
  );
}

function StatusBar() {
  return (
    <footer className="flex h-[15px] items-center border-t border-[#999] bg-[#fdfdfd] pr-[38px] pl-0.5 font-bold text-[#111]">
      <p className="basis-[600px]">Select spine curve, or click MB2 to complete spine selection</p>
      <p className="flex-1">Tangent Curves : Edge of Section Surface(6)</p>
      <div className="flex gap-1">
        <Glyph w={10} h={11}>
          <path d="M0 0h10v11H0z" fill="#ddd" stroke="none" />
          <path d="M2 2v6M5 2v6l3-5v6" />
        </Glyph>
        <Glyph w={10} h={11}>
          <path d="M3 .5H.5v10H3M7 .5h2.500v10H7" />
          <path d="M3 4h4v4H3z" fill="#88a" />
        </Glyph>
      </div>
    </footer>
  );
}

export default function App() {
  return (
    <div className="flex min-h-screen flex-col overflow-x-hidden border-t-[7px] border-b-[6px] border-black font-['DejaVu_Sans_Condensed','DejaVu_Sans',sans-serif] text-[9px] leading-3">
      <Ribbon />
      <Toolbar />
      <div className="flex flex-1">
        <ResourceBar />
        <Viewport />
      </div>
      <StatusBar />
    </div>
  );
}
